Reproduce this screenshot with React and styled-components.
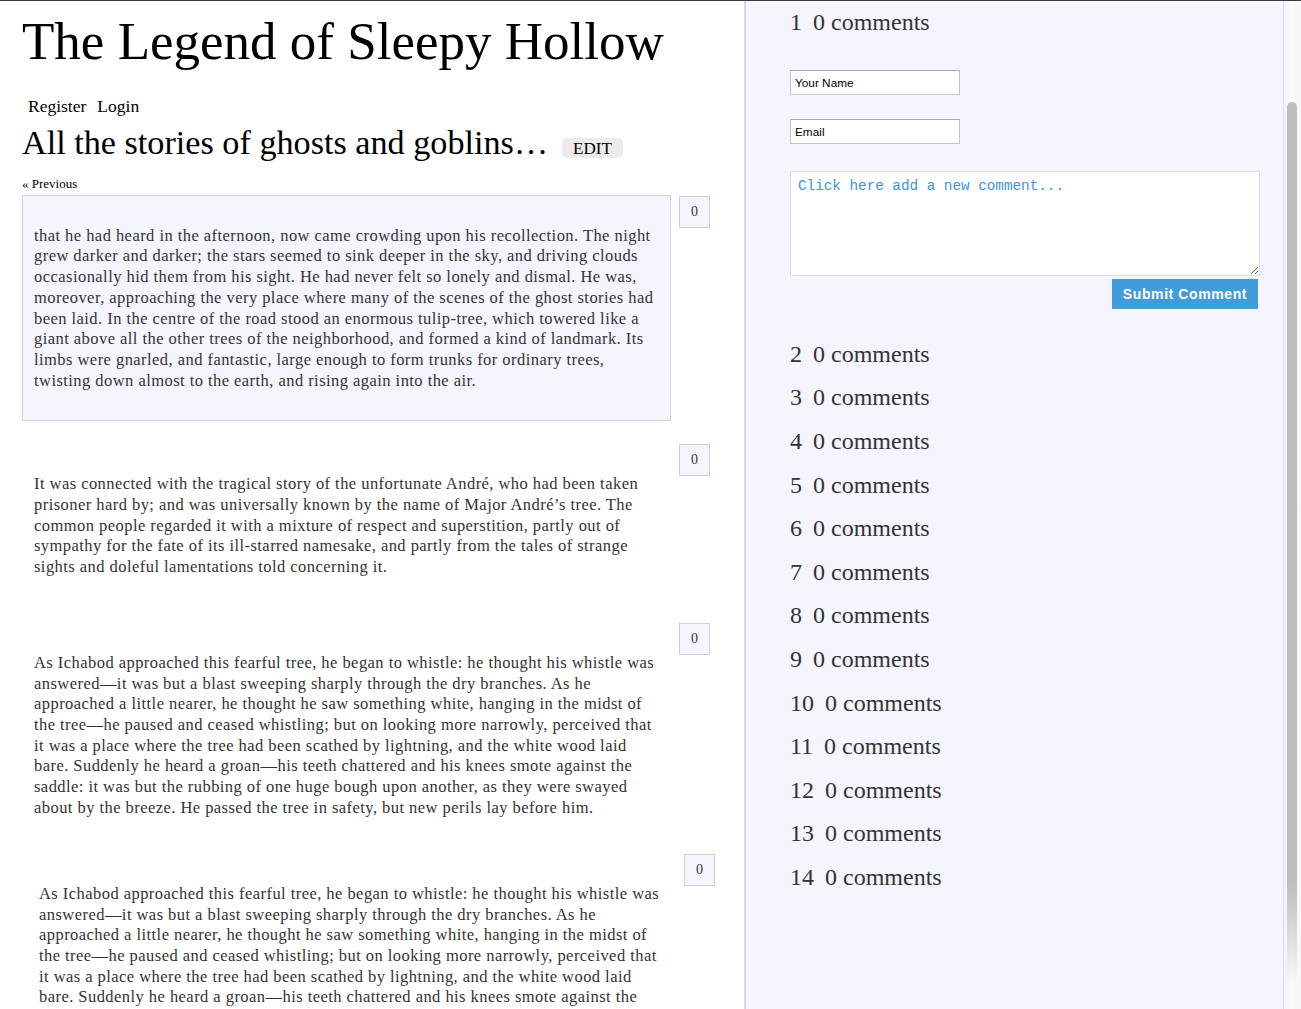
import React from 'react';
import styled, { createGlobalStyle } from 'styled-components';

const GlobalStyle = createGlobalStyle`
    html, body {
        margin: 0;
        padding: 0;
        height: 100%;
        overflow: hidden;
        background: #fff;
    }
    body {
        font-family: "Liberation Serif", "Times New Roman", serif;
        color: #333;
    }
`;

const Page = styled.div`
    display: flex;
    height: 100vh;
    border-top: 1px solid #3a3a3a;
    box-sizing: border-box;
    overflow: hidden;
`;

const StoryColumn = styled.main`
    width: 722px;
    flex: none;
    padding-left: 22px;
    border-right: 2px solid #dadada;
    overflow: hidden;
`;

const Title = styled.h1`
    margin: 14px 0 0;
    font-size: 53px;
    font-weight: normal;
    line-height: 1;
    color: #000;
    white-space: nowrap;
`;

const AuthLinks = styled.nav`
    display: flex;
    gap: 11px;
    margin: 30px 0 0 6px;
    font-size: 17.5px;
    line-height: 1;
`;

const AuthLink = styled.a`
    color: #000;
    text-decoration: none;
    cursor: pointer;
`;

const ChapterRow = styled.div`
    display: flex;
    align-items: baseline;
    gap: 14px;
    margin-top: 10px;
`;

const ChapterTitle = styled.h2`
    margin: 0;
    font-size: 34.2px;
    font-weight: normal;
    line-height: 1;
    color: #000;
`;

const EditButton = styled.button`
    font-family: "Liberation Serif", "Times New Roman", serif;
    font-size: 17px;
    line-height: 1;
    color: #000;
    background: #ececec;
    border: none;
    border-radius: 5px;
    padding: 2px 11px 1px;
    cursor: pointer;
`;

const PrevLink = styled.a`
    display: block;
    margin-top: 17px;
    font-size: 13px;
    line-height: 14px;
    color: #000;
    text-decoration: none;
`;

const Sections = styled.div`
    display: flex;
    flex-direction: column;
    margin-top: 4px;
`;

const Section = styled.section`
    display: flex;
    align-items: flex-start;
    gap: 8px;
    margin-left: ${({ $shift }) => $shift || 0}px;
    margin-bottom: ${({ $after }) => $after || 0}px;
`;

const Passage = styled.div`
    width: 624px;
    flex: none;
    padding: 30px 12px 29px 11px;
    font-size: 16.5px;
    letter-spacing: 0.45px;
    line-height: 20.7px;
    color: #333;
    background: ${({ $active }) => ($active ? '#f5f5ff' : 'transparent')};
    border: 1px solid ${({ $active }) => ($active ? '#d4d4dc' : 'transparent')};
`;

const PassageLine = styled.span`
    display: block;
    white-space: nowrap;
`;

const Counter = styled.div`
    width: 29px;
    height: 30px;
    flex: none;
    margin-top: 1px;
    display: flex;
    align-items: center;
    justify-content: center;
    font-size: 14px;
    color: #333;
    background: #f5f5ff;
    border: 1px solid #d0d0d6;
`;

const CommentPanel = styled.aside`
    flex: 1;
    background: #f5f5ff;
    padding-left: 44px;
    padding-right: 23px;
    overflow: hidden;
`;

const CommentRow = styled.div`
    height: 43.6px;
    display: flex;
    align-items: center;
    font-size: 24px;
    color: #333;
    white-space: nowrap;
`;

const RowNumber = styled.span`
    margin-right: 11px;
`;

const CommentForm = styled.form`
    display: flex;
    flex-direction: column;
    align-items: flex-start;
    margin: 25px 0 24px;
`;

const TextInput = styled.input`
    width: 170px;
    height: 25px;
    box-sizing: border-box;
    padding: 2px 4px 0;
    font-family: "Liberation Sans", Arial, sans-serif;
    font-size: 11.8px;
    color: #000;
    background: #fff;
    border: 1px solid #c4c4c4;
    border-top-color: #a9a9a9;
    outline: none;
    margin-bottom: ${({ $after }) => $after || 0}px;

    &::placeholder {
        color: #000;
    }
`;

const CommentBox = styled.textarea`
    width: 100%;
    height: 105px;
    box-sizing: border-box;
    padding: 6px 7px;
    font-family: "Liberation Mono", "Courier New", monospace;
    font-size: 14.3px;
    line-height: 16px;
    background: #fff;
    border: 1px solid #dcdce2;
    outline: none;
    resize: vertical;

    &::placeholder {
        color: #3a95e2;
    }
`;

const SubmitButton = styled.button`
    align-self: flex-end;
    margin: 3px 2px 0 0;
    width: 146px;
    height: 30px;
    font-family: "Liberation Sans", Arial, sans-serif;
    font-size: 14px;
    font-weight: bold;
    letter-spacing: 0.6px;
    color: #fff;
    background: #419cdc;
    border: none;
    cursor: pointer;
`;

const ScrollTrack = styled.div`
    width: 18px;
    flex: none;
    border-left: 1px solid #dedede;
    background: linear-gradient(to right, #f2f2f2, #fcfcfc 40%, #f6f6f6);
    display: flex;
    justify-content: flex-start;
    padding-left: 3px;
    box-sizing: border-box;
`;

const ScrollThumb = styled.div`
    width: 10px;
    height: 885px;
    margin-top: 101px;
    border-radius: 5px 5px 3px 3px;
    background: linear-gradient(to bottom, #bdbdbd 0%, #bdbdbd 88%, rgba(189, 189, 189, 0) 100%);
`;

const ichabod = [
    'As Ichabod approached this fearful tree, he began to whistle: he thought his whistle was',
    'answered—it was but a blast sweeping sharply through the dry branches. As he',
    'approached a little nearer, he thought he saw something white, hanging in the midst of',
    'the tree—he paused and ceased whistling; but on looking more narrowly, perceived that',
    'it was a place where the tree had been scathed by lightning, and the white wood laid',
    'bare. Suddenly he heard a groan—his teeth chattered and his knees smote against the',
    'saddle: it was but the rubbing of one huge bough upon another, as they were swayed',
    'about by the breeze. He passed the tree in safety, but new perils lay before him.',
];

const passages = [
    {
        lines: [
            'that he had heard in the afternoon, now came crowding upon his recollection. The night',
            'grew darker and darker; the stars seemed to sink deeper in the sky, and driving clouds',
            'occasionally hid them from his sight. He had never felt so lonely and dismal. He was,',
            'moreover, approaching the very place where many of the scenes of the ghost stories had',
            'been laid. In the centre of the road stood an enormous tulip-tree, which towered like a',
            'giant above all the other trees of the neighborhood, and formed a kind of landmark. Its',
            'limbs were gnarled, and fantastic, large enough to form trunks for ordinary trees,',
            'twisting down almost to the earth, and rising again into the air.',
        ],
        active: true,
        after: 22,
    },
    {
        lines: [
            'It was connected with the tragical story of the unfortunate André, who had been taken',
            'prisoner hard by; and was universally known by the name of Major André’s tree. The',
            'common people regarded it with a mixture of respect and superstition, partly out of',
            'sympathy for the fate of its ill-starred namesake, and partly from the tales of strange',
            'sights and doleful lamentations told concerning it.',
        ],
        after: 14,
    },
    { lines: ichabod, after: 4.4 },
    { lines: ichabod, shift: 5 },
];

const otherRows = Array.from({ length: 13 }, (_, i) => i + 2);

const App = () => (
    <>
        <GlobalStyle />
        <Page>
            <StoryColumn>
                <Title>The Legend of Sleepy Hollow</Title>
                <AuthLinks>
                    <AuthLink>Register</AuthLink>
                    <AuthLink>Login</AuthLink>
                </AuthLinks>
                <ChapterRow>
                    <ChapterTitle>All the stories of ghosts and goblins…</ChapterTitle>
                    <EditButton type="button">EDIT</EditButton>
                </ChapterRow>
                <PrevLink>« Previous</PrevLink>
                <Sections>
                    {passages.map((p, i) => (
                        <Section key={i} $after={p.after} $shift={p.shift}>
                            <Passage $active={p.active}>
                                {p.lines.map((line, j) => (
                                    <PassageLine key={j}>{line}</PassageLine>
                                ))}
                            </Passage>
                            <Counter>0</Counter>
                        </Section>
                    ))}
                </Sections>
            </StoryColumn>
            <CommentPanel>
                <CommentRow>
                    <RowNumber>1</RowNumber>0 comments
                </CommentRow>
                <CommentForm onSubmit={(e) => e.preventDefault()}>
                    <TextInput placeholder="Your Name" $after={24} />
                    <TextInput placeholder="Email" $after={27} />
                    <CommentBox placeholder="Click here add a new comment..." />
                    <SubmitButton type="submit">Submit Comment</SubmitButton>
                </CommentForm>
                {otherRows.map((n) => (
                    <CommentRow key={n}>
                        <RowNumber>{n}</RowNumber>0 comments
                    </CommentRow>
                ))}
            </CommentPanel>
            <ScrollTrack>
                <ScrollThumb />
            </ScrollTrack>
        </Page>
    </>
);

export default App;
